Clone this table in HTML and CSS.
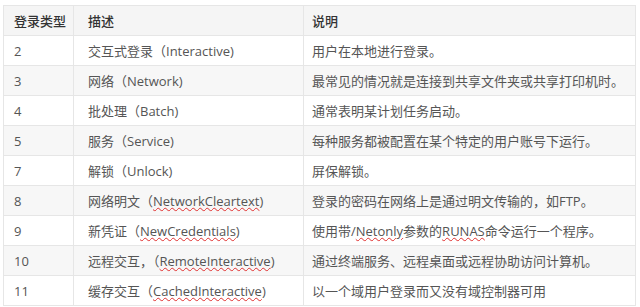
FILE: index.html
```html
<!DOCTYPE html>
<html lang="zh-CN">
<head>
<meta charset="utf-8">
<link rel="stylesheet" href="styles.css">
</head>
<body>
<table class="logon">
  <colgroup>
    <col class="c1"><col class="c2"><col class="c3">
  </colgroup>
  <thead>
    <tr><th>登录类型</th><th>描述</th><th>说明</th></tr>
  </thead>
  <tbody>
    <tr><td>2</td><td>交互式登录（Interactive)</td><td>用户在本地进行登录。</td></tr>
    <tr><td>3</td><td>网络（Network)</td><td>最常见的情况就是连接到共享文件夹或共享打印机时。</td></tr>
    <tr><td>4</td><td>批处理（Batch)</td><td>通常表明某计划任务启动。</td></tr>
    <tr><td>5</td><td>服务（Service)</td><td>每种服务都被配置在某个特定的用户账号下运行。</td></tr>
    <tr><td>7</td><td>解锁（Unlock)</td><td>屏保解锁。</td></tr>
    <tr><td>8</td><td>网络明文（<span class="sp">NetworkCleartext</span>)</td><td>登录的密码在网络上是通过明文传输的，如FTP。</td></tr>
    <tr><td>9</td><td>新凭证（<span class="sp">NewCredentials</span>)</td><td>使用带/<span class="sp">Netonly</span>参数的<span class="sp">RUNAS</span>命令运行一个程序。</td></tr>
    <tr><td>10</td><td>远程交互，（<span class="sp">RemoteInteractive</span>)</td><td>通过终端服务、远程桌面或远程协助访问计算机。</td></tr>
    <tr><td>11</td><td>缓存交互（<span class="sp">CachedInteractive</span>)</td><td>以一个域用户登录而又没有域控制器可用</td></tr>
  </tbody>
</table>
</body>
</html>
```
FILE: styles.css
```css
html, body {
  margin: 0;
  padding: 0;
  background: #fff;
}
body {
  padding: 5px 0 0 3px;
  font-family: "Open Sans", "Noto Sans CJK SC", sans-serif;
  font-size: 13px;
  color: #555;
}
.logon {
  border-collapse: collapse;
  table-layout: fixed;
  width: 632px;
  border: 1px solid #e6e6e6;
}
.c1 { width: 70px; }
.c2 { width: 230px; }
.c3 { width: 332px; }
.logon th,
.logon td {
  height: 29px;
  padding: 0 8px 0 10px;
  border: 1px solid #e6e6e6;
  text-align: left;
  vertical-align: middle;
  white-space: nowrap;
  line-height: 18px;
}
.logon td:nth-child(2), .logon th:nth-child(2) { padding-left: 14px; }
.logon td:nth-child(3), .logon th:nth-child(3) { padding-left: 8px; }
.logon th {
  font-weight: 500;
  color: #333;
  background: #f5f5f5;
}
.logon tbody tr:nth-child(even) td {
  background: #f7f7f7;
}
.sp {
  text-decoration: underline wavy #e03030;
  text-decoration-thickness: 1px;
  text-underline-offset: 1px;
}
```
